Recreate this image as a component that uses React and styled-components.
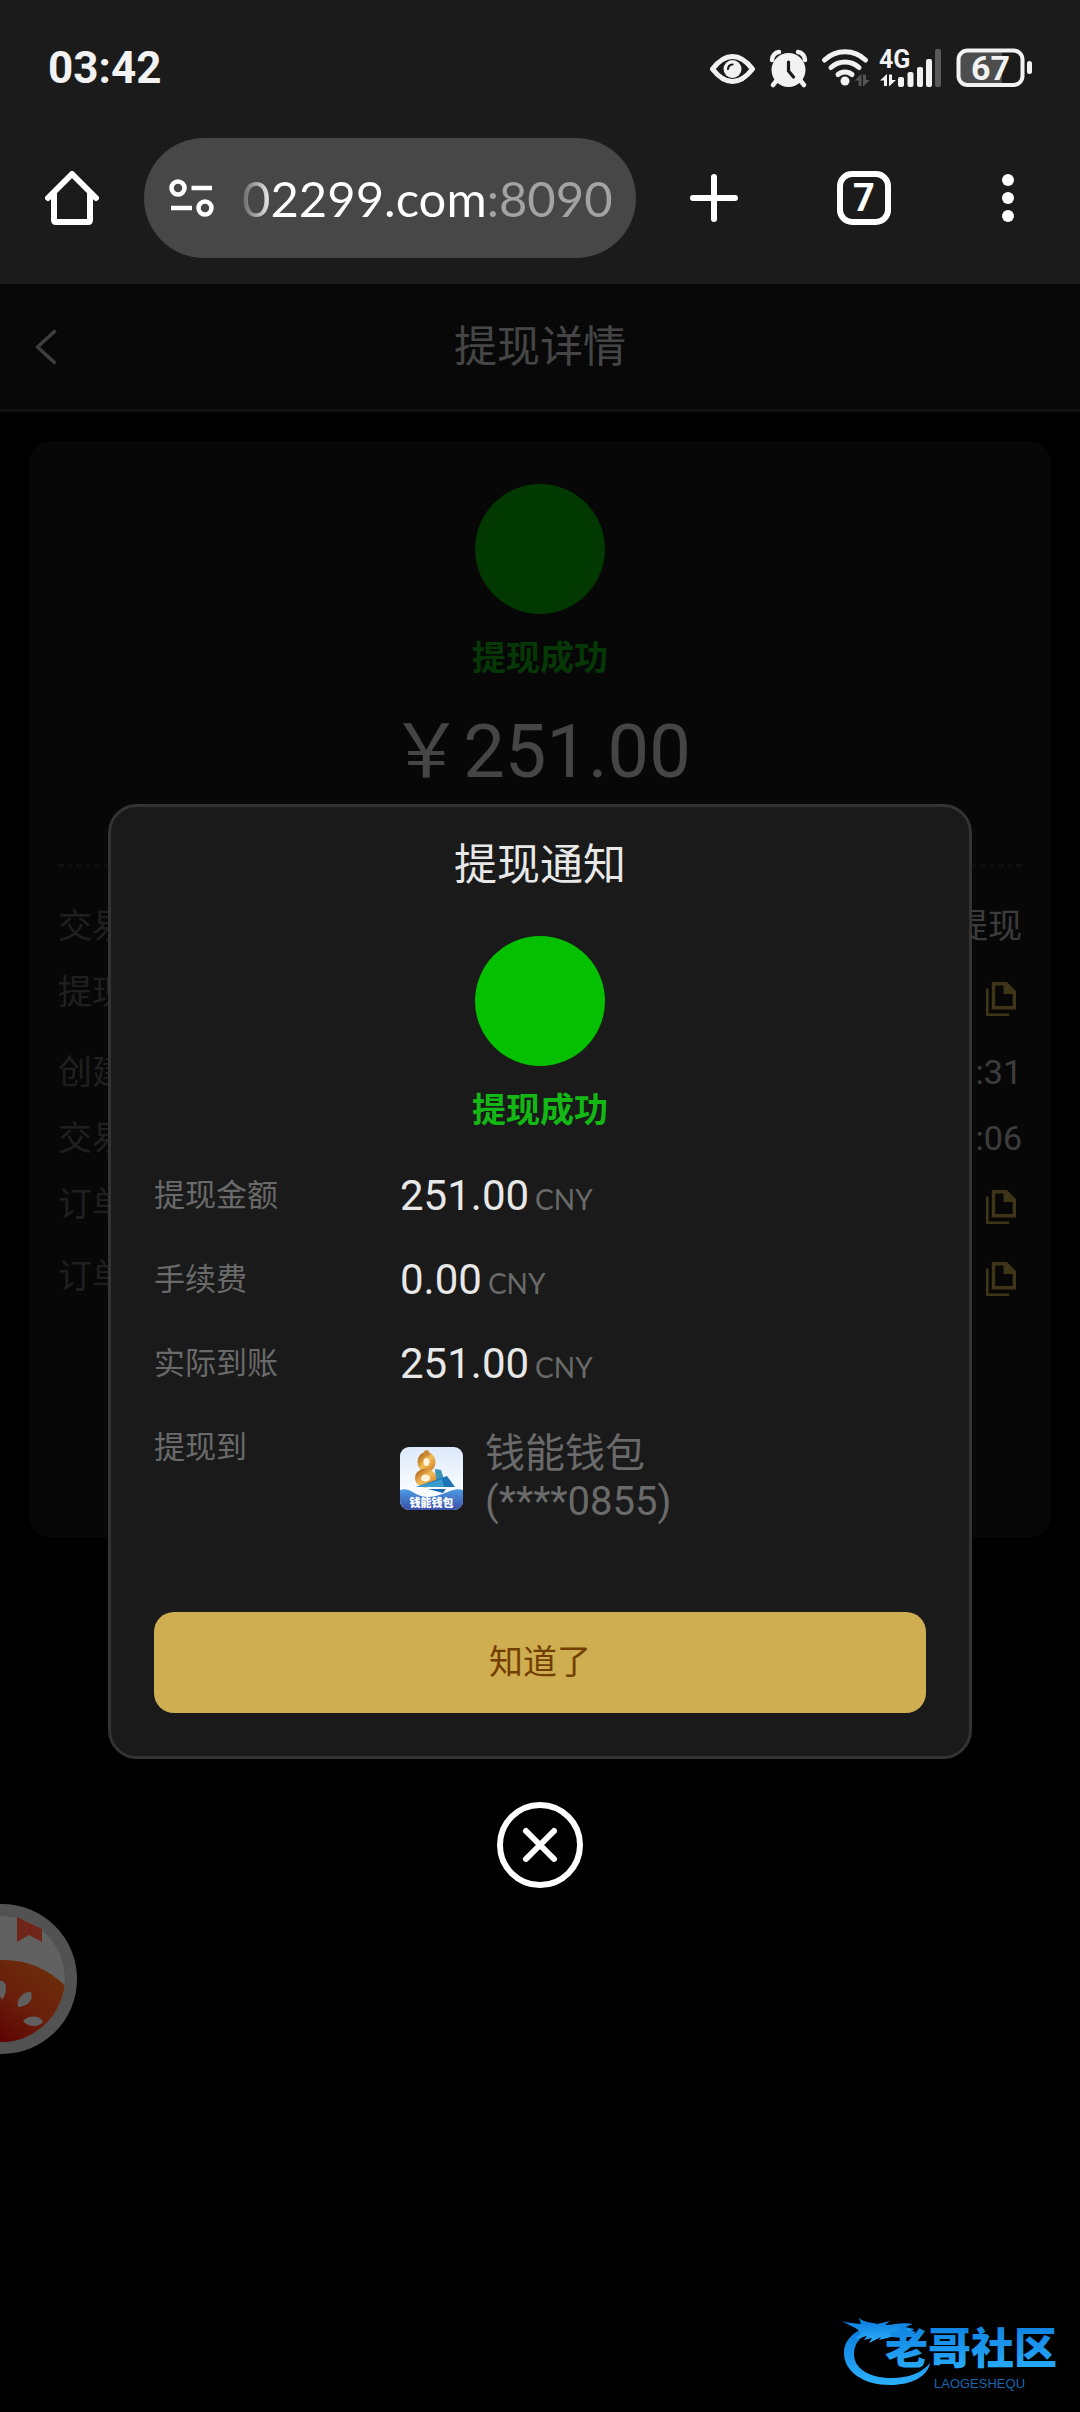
import React, { useState } from "react";
import styled, { createGlobalStyle } from "styled-components";

const GlobalStyle = createGlobalStyle`
  * {
    box-sizing: border-box;
  }
  body {
    margin: 0;
    background-color: #000000;
    font-family: Roboto, "Noto Sans CJK SC", sans-serif;
  }
  button {
    border: none;
    padding: 0;
    background: none;
    font-family: inherit;
    cursor: pointer;
  }
`;

const Screen = styled.div`
  display: flex;
  flex-direction: column;
  min-height: 100vh;
`;

const StatusBar = styled.div`
  display: flex;
  align-items: center;
  justify-content: space-between;
  height: 112px;
  padding: 24px 46px 0 48px;
  background-color: #1b1b1b;
`;

const Clock = styled.time`
  color: #f2f2f2;
  font-size: 44px;
  font-weight: 700;
`;

const Toolbar = styled.div`
  display: flex;
  align-items: center;
  padding: 26px 0;
  background-color: #1b1b1b;
`;

const ToolButton = styled.button`
  display: flex;
  align-items: center;
  justify-content: center;
  width: ${(props) => (props.$wide ? "156px" : "144px")};
  height: 120px;
  color: #ffffff;
`;

const AddressBar = styled.div`
  display: flex;
  flex: 1;
  align-items: center;
  min-width: 0;
  height: 120px;
  padding: 0 24px;
  gap: 28px;
  border-radius: 60px;
  background-color: #474747;
`;

const AddressInput = styled.input`
  flex: 1;
  min-width: 0;
  height: 72px;
  border: none;
  padding: 0;
  outline: none;
  font-family: Lato, sans-serif;
  font-size: 49px;
  text-align: right;
  color: transparent;
  background: linear-gradient(
    to left,
    #a3a3a3 125px,
    #ffffff 125px,
    #ffffff 338px,
    #5c5c5c 372px
  );
  background-clip: text;
`;

const TabCount = styled.span`
  display: flex;
  align-items: center;
  justify-content: center;
  width: 54px;
  height: 54px;
  border: 6px solid #ffffff;
  border-radius: 15px;
  font-size: 38px;
  font-weight: 700;
`;

const Viewport = styled.div`
  position: relative;
  flex: 1;
  background-color: #000000;
`;

const PageHeader = styled.header`
  display: grid;
  grid-template-columns: 92px 1fr 92px;
  align-items: center;
  height: 128px;
  border-bottom: 3px solid #393939;
  background-color: #1b1b1b;
`;

const BackButton = styled.button`
  display: flex;
  align-items: center;
  justify-content: center;
  height: 92px;
  color: #d0d0d0;
`;

const Title = styled.h1`
  margin: 0;
  color: #e8e8e8;
  font-size: 43px;
  font-weight: 400;
  line-height: 60px;
  text-align: center;
`;

const Card = styled.section`
  display: flex;
  flex-direction: column;
  align-items: center;
  min-height: 1097px;
  margin: 29px;
  padding: 43px 29px;
  border-radius: 22px;
  background-color: #181818;
`;

const StatusDot = styled.div`
  width: 130px;
  height: 130px;
  border-radius: 50%;
  background-color: #05c000;
`;

const StatusText = styled.p`
  margin: 20px 0 0;
  color: #14b814;
  font-size: 34px;
  font-weight: 700;
  line-height: 48px;
`;

const Amount = styled.p`
  margin: 12px 0 0;
  color: #e8e8e8;
  font-size: 74px;
  line-height: 116px;
`;

const Details = styled.dl`
  align-self: stretch;
  margin: 54px 0 0;
  padding-top: 26px;
  border-top: 3px dashed #333333;
`;

const DetailRow = styled.div`
  display: flex;
  justify-content: space-between;
  height: ${(props) => props.$height}px;
  font-size: 34px;
  line-height: 66px;
`;

const DetailLabel = styled.dt`
  color: #6a6a6a;
`;

const DetailValue = styled.dd`
  display: flex;
  align-items: center;
  margin: 0;
  color: #c8c8c8;
`;

const CopyButton = styled.button`
  display: flex;
  padding: 0 6px;
  color: #cfae52;
`;

const Overlay = styled.div`
  position: absolute;
  inset: 0;
  display: flex;
  flex-direction: column;
  align-items: center;
  justify-content: center;
  gap: 43px;
  padding-bottom: 4px;
  background-color: rgba(0, 0, 0, 0.7);
`;

const Modal = styled.div`
  display: flex;
  flex-direction: column;
  align-items: center;
  width: 80%;
  padding: 28px 43px 43px;
  border: 3px solid #333333;
  border-radius: 29px;
  background-color: #1a1a1a;
`;

const ModalTitle = styled(Title).attrs({ as: "h2" })`
  margin-bottom: 41px;
`;

const Summary = styled.dl`
  display: grid;
  grid-template-columns: 246px 1fr;
  row-gap: 36px;
  align-self: stretch;
  margin: 38px 0 86px;
  line-height: 48px;
`;

const SummaryLabel = styled.dt`
  color: #6a6a6a;
  font-size: 31px;
`;

const SummaryValue = styled.dd`
  height: 48px;
  margin: 0;
  color: #e8e8e8;
  font-size: 42px;
`;

const Currency = styled.span`
  margin-left: 6px;
  color: #6a6a6a;
  font-family: Lato, sans-serif;
  font-size: 28px;
  line-height: 1;
`;

const Wallet = styled.dd`
  display: flex;
  align-items: center;
  gap: 22px;
  margin: 0;
  padding-top: 6px;
  color: #6a6a6a;
  font-size: 40px;
`;

const ConfirmButton = styled.button`
  align-self: stretch;
  height: 101px;
  padding-bottom: 6px;
  border-radius: 20px;
  background-color: #cfae52;
  color: #733f00;
  font-size: 34px;
`;

const CloseButton = styled.button`
  display: flex;
  color: #ffffff;
`;

const FloatingButton = styled.button`
  position: absolute;
  left: 0;
  top: 1620px;
  display: flex;
`;

const Watermark = styled.div`
  position: absolute;
  right: 14px;
  bottom: 20px;
  display: flex;
`;

const details = [
  { label: "交易", value: "提现", height: 66 },
  { label: "提现", copy: true, height: 80 },
  { label: "创建", value: ":31", height: 66 },
  { label: "交易", value: ":06", height: 66 },
  { label: "订单", copy: true, height: 72 },
  { label: "订单", copy: true, height: 72 },
];

const summary = [
  { label: "提现金额", value: "251.00" },
  { label: "手续费", value: "0.00" },
  { label: "实际到账", value: "251.00" },
];

const StatusIcons = () => (
  <svg width="324" height="56" viewBox="711 40 324 56" fill="#f2f2f2">
    {/* eye */}
    <path
      d="M713.500 69C720 60.500 726 56.500 733.500 56.500S747 60.500 753.500 69C747 77.500 741 81.500 733.500 81.500S720 77.500 713.500 69Z"
      fill="none"
      stroke="#f2f2f2"
      strokeWidth="5"
      strokeLinejoin="round"
    />
    <circle cx="733.500" cy="69" r="9" />
    <path
      d="M729 69a5 5 0 0 1 4.500-4.500"
      fill="none"
      stroke="#1b1b1b"
      strokeWidth="2.200"
      strokeLinecap="round"
    />
    {/* alarm */}
    <circle cx="789.500" cy="70" r="17" />
    <path
      d="M773 60c0-4 3-7.500 7-8M806 60c0-4-3-7.500-7-8M778 80l-4 5M801 80l4 5"
      fill="none"
      stroke="#f2f2f2"
      strokeWidth="4.500"
      strokeLinecap="round"
    />
    <path
      d="M789.500 62v9l5 6"
      fill="none"
      stroke="#1b1b1b"
      strokeWidth="3.200"
      strokeLinecap="round"
    />
    {/* wifi */}
    <g fill="none" stroke="#f2f2f2" strokeWidth="5" strokeLinecap="round">
      <path d="M825.500 60C837 49 855 49 866.500 60" />
      <path d="M832 67.500C840 60 852 60 860 67.500" />
      <path d="M839 74.500C843 71 849 71 853 74.500" />
    </g>
    <circle cx="846" cy="81" r="4.500" />
    <path d="M855.500 80.500l7-6.500v12h-3v-5.500zM871 80l-7 6.500v-12h3V80z" fill="#555555" />
    {/* mobile signal */}
    <text x="880" y="68" fontSize="25" fontWeight="700" fontFamily="Roboto">
      4G
    </text>
    <path d="M881 80.500l7-6.500v12h-3v-5.500zM897 80l-7 6.500v-12h3V80z" />
    <rect x="899" y="77" width="6" height="10" rx="2" />
    <rect x="908.500" y="72" width="6" height="15" rx="2" />
    <rect x="918" y="67" width="6" height="20" rx="2" />
    <rect x="927" y="59" width="6" height="28" rx="2" />
    <rect x="936" y="49" width="6" height="38" rx="2" fill="#5a5a5a" />
    {/* battery */}
    <rect x="961" y="52" width="42" height="32" fill="#4d4d4d" />
    <rect
      x="959.500"
      y="50.500"
      width="64"
      height="34.500"
      rx="9"
      fill="none"
      stroke="#f2f2f2"
      strokeWidth="4"
    />
    <rect x="1028" y="61" width="5" height="13" rx="2.500" />
    <text x="991.500" y="80" fontSize="34" fontWeight="700" fontFamily="Roboto" textAnchor="middle">
      67
    </text>
  </svg>
);

const HomeIcon = () => (
  <svg
    width="54"
    height="54"
    viewBox="0 0 54 54"
    fill="none"
    stroke="currentColor"
    strokeWidth="6"
    strokeLinecap="round"
    strokeLinejoin="round"
  >
    <path d="M3 27L27 3l24 24M9 22v27q0 2 2 2h32q2 0 2-2V22" />
  </svg>
);

const SiteIcon = () => (
  <svg
    width="46"
    height="40"
    viewBox="0 0 46 40"
    fill="none"
    stroke="#ffffff"
    strokeWidth="4.500"
  >
    <circle cx="10" cy="10" r="6.500" />
    <path d="M23.500 10H44M3 30h21" />
    <circle cx="37" cy="30" r="6.500" />
  </svg>
);

const PlusIcon = () => (
  <svg
    width="48"
    height="48"
    viewBox="0 0 48 48"
    stroke="currentColor"
    strokeWidth="6"
    strokeLinecap="round"
  >
    <path d="M3 24h42M24 3v42" />
  </svg>
);

const DotsIcon = () => (
  <svg width="12" height="48" viewBox="0 0 12 48" fill="currentColor">
    <circle cx="6" cy="6" r="6" />
    <circle cx="6" cy="24" r="6" />
    <circle cx="6" cy="42" r="6" />
  </svg>
);

const BackIcon = () => (
  <svg
    width="22"
    height="36"
    viewBox="0 0 22 36"
    fill="none"
    stroke="currentColor"
    strokeWidth="3.500"
  >
    <path d="M20.500 1.500L2.500 18l18 16.500" strokeLinejoin="round" />
  </svg>
);

const CopyIcon = () => (
  <svg width="30" height="34" viewBox="0 0 30 34" fill="none" stroke="currentColor">
    <path d="M7.500 1.700h12.500l8.300 8.300v15.800H7.500z" strokeWidth="3.400" />
    <path d="M17.500 0.500H21L30 9.500V12H17.500z" fill="currentColor" stroke="none" />
    <path d="M1.300 6.500v26.200h22" strokeWidth="2.600" />
  </svg>
);

const WalletIcon = () => (
  <svg width="63" height="63" viewBox="0 0 63 63">
    <defs>
      <linearGradient id="walletSky" x1="0" y1="0" x2="0" y2="1">
        <stop offset="0" stopColor="#dce9fc" />
        <stop offset="0.700" stopColor="#fafdff" />
      </linearGradient>
      <linearGradient id="walletSea" x1="0" y1="0" x2="0" y2="1">
        <stop offset="0" stopColor="#4e9be4" />
        <stop offset="1" stopColor="#3b50a8" />
      </linearGradient>
      <linearGradient id="walletGold" x1="0" y1="0" x2="1" y2="1">
        <stop offset="0" stopColor="#b9701f" />
        <stop offset="0.500" stopColor="#f3bd58" />
        <stop offset="1" stopColor="#d8892e" />
      </linearGradient>
      <clipPath id="walletClip">
        <rect width="63" height="63" rx="9" />
      </clipPath>
    </defs>
    <g clipPath="url(#walletClip)">
      <rect width="63" height="63" fill="url(#walletSky)" />
      <path d="M35 22l6 1 3 9-8 4z" fill="#3d94b4" />
      <ellipse
        cx="26.500"
        cy="15"
        rx="6"
        ry="7"
        fill="#fdf3dd"
        stroke="url(#walletGold)"
        strokeWidth="6"
      />
      <ellipse
        cx="25.500"
        cy="31"
        rx="7.500"
        ry="6.500"
        fill="#fdf3dd"
        stroke="url(#walletGold)"
        strokeWidth="6"
      />
      <path d="M24 4l4-1 2 5-5 1z" fill="#c98634" />
      <path d="M16 40L47 29l8 11z" fill="#1d74b5" />
      <path d="M16 40l26-8 2 8z" fill="#3a9bcd" />
      <path d="M28 42h18l-3 4z" fill="#1c68ae" />
      <path d="M0 43c9-3 12 3 21 6 12 3 20-2 29-5 5-2 9-2 13-1v20H0z" fill="url(#walletSea)" />
      <text
        x="31.500"
        y="60"
        fill="#ffffff"
        fontSize="11"
        fontWeight="900"
        fontFamily="Noto Sans CJK SC"
        textAnchor="middle"
      >
        钱能钱包
      </text>
    </g>
  </svg>
);

const CloseIcon = () => (
  <svg
    width="86"
    height="86"
    viewBox="0 0 86 86"
    fill="none"
    stroke="currentColor"
    strokeWidth="6"
    strokeLinecap="round"
  >
    <circle cx="43" cy="43" r="40" />
    <path d="M29 29l28 28M57 29L29 57" />
  </svg>
);

const PacketIcon = () => (
  <svg width="77" height="150" viewBox="0 0 77 150">
    <defs>
      <linearGradient id="packetRed" x1="0.600" y1="0" x2="0" y2="1">
        <stop offset="0" stopColor="#6c2d0b" />
        <stop offset="0.500" stopColor="#6a1f0b" />
        <stop offset="1" stopColor="#5c0302" />
      </linearGradient>
    </defs>
    <circle cx="2" cy="75" r="75" fill="#525252" />
    <circle cx="2" cy="75" r="63.500" fill="#616161" stroke="#505050" />
    <path d="M0 56C24 55 46 63 64.500 81A63.500 63.500 0 0 1 0 138z" fill="url(#packetRed)" />
    <path d="M17 13l25 12v13l-13-7-12 7z" fill="#6f2517" />
    <path d="M0 77c4-1 6 3 6 8 0 4-2 8-4 11L0 92z" fill="#606060" />
    <path d="M18 103c-2-8 5-16 13-15 3 8-3 14-13 15z" fill="#606060" />
    <path d="M23 117c6-6 17-6 20 1-5 6-15 5-20-1z" fill="#606060" />
  </svg>
);

const WatermarkLogo = () => (
  <svg width="224" height="76" viewBox="0 0 224 76">
    <defs>
      <linearGradient id="markBlue" x1="0" y1="0" x2="0" y2="1">
        <stop offset="0" stopColor="#0a78dc" />
        <stop offset="1" stopColor="#2bb0fb" />
      </linearGradient>
    </defs>
    <g fill="url(#markBlue)">
      <path d="M32 8C10 15 2 25 2 37c0 19 20 32 46 32 22 0 38-9 40-22-8 10-22 15-38 15C26 62 12 52 12 38 12 26 20 18 34 15z" />
      <path d="M0 5c6 2 12 2 19 3L17 2c6 5 12 4 18 6l13-3-5 4c9 0 18-3 28-1l-8 3 9 2-4 4h-9l7 3-2 2-15-1-12 3 2-3-12 6 3-5-8 2 3-4-12 3 6-6C16 12 8 10 0 5z" />
      <text x="43" y="48" fontSize="43" fontWeight="900" fontFamily="Noto Sans CJK SC">
        老哥社区
      </text>
    </g>
    <text x="92" y="72" fill="#1767ad" fontSize="13" fontFamily="Liberation Sans">
      LAOGESHEQU
    </text>
  </svg>
);

const DetailsCard = () => (
  <Card>
    <StatusDot />
    <StatusText>提现成功</StatusText>
    <Amount>{"\uFFE5"}251.00</Amount>
    <Details>
      {details.map((item, index) => (
        <DetailRow key={index} $height={item.height}>
          <DetailLabel>{item.label}</DetailLabel>
          <DetailValue>
            {item.copy ? (
              <CopyButton aria-label="复制">
                <CopyIcon />
              </CopyButton>
            ) : (
              item.value
            )}
          </DetailValue>
        </DetailRow>
      ))}
    </Details>
  </Card>
);

const Notice = ({ onClose }) => (
  <Overlay>
    <Modal role="dialog" aria-labelledby="notice-title">
      <ModalTitle id="notice-title">提现通知</ModalTitle>
      <StatusDot />
      <StatusText>提现成功</StatusText>
      <Summary>
        {summary.map((item) => (
          <React.Fragment key={item.label}>
            <SummaryLabel>{item.label}</SummaryLabel>
            <SummaryValue>
              {item.value}
              <Currency>CNY</Currency>
            </SummaryValue>
          </React.Fragment>
        ))}
        <SummaryLabel>提现到</SummaryLabel>
        <Wallet>
          <WalletIcon />
          <span>
            钱能钱包
            <br />
            (****0855)
          </span>
        </Wallet>
      </Summary>
      <ConfirmButton onClick={onClose}>知道了</ConfirmButton>
    </Modal>
    <CloseButton aria-label="关闭" onClick={onClose}>
      <CloseIcon />
    </CloseButton>
  </Overlay>
);

const App = () => {
  const [open, setOpen] = useState(true);
  const [address, setAddress] = useState("02299.com:8090");

  return (
    <>
      <GlobalStyle />
      <Screen>
        <StatusBar>
          <Clock>03:42</Clock>
          <StatusIcons />
        </StatusBar>
        <Toolbar>
          <ToolButton aria-label="主页">
            <HomeIcon />
          </ToolButton>
          <AddressBar>
            <SiteIcon />
            <AddressInput
              aria-label="网址"
              value={address}
              onChange={(e) => setAddress(e.target.value)}
            />
          </AddressBar>
          <ToolButton $wide aria-label="新标签页">
            <PlusIcon />
          </ToolButton>
          <ToolButton>
            <TabCount>7</TabCount>
          </ToolButton>
          <ToolButton aria-label="菜单">
            <DotsIcon />
          </ToolButton>
        </Toolbar>
        <Viewport>
          <PageHeader>
            <BackButton aria-label="返回">
              <BackIcon />
            </BackButton>
            <Title>提现详情</Title>
          </PageHeader>
          <DetailsCard />
          {open && <Notice onClose={() => setOpen(false)} />}
          <FloatingButton aria-label="红包">
            <PacketIcon />
          </FloatingButton>
          <Watermark>
            <WatermarkLogo />
          </Watermark>
        </Viewport>
      </Screen>
    </>
  );
};

export default App;
